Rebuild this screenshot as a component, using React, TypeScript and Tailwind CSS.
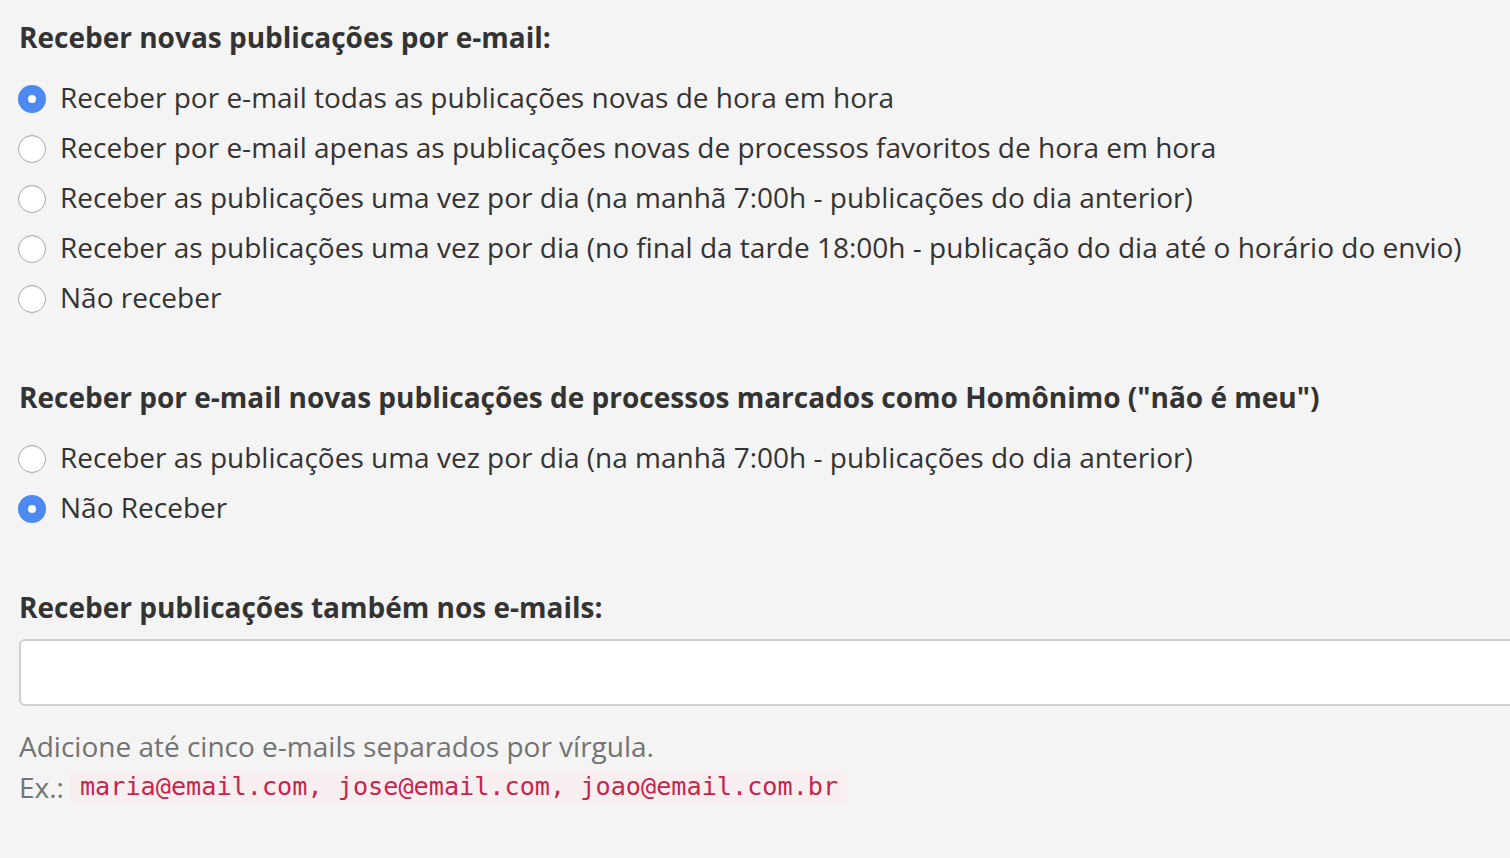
import { useState } from "react";

const frequencyOptions = [
  "Receber por e-mail todas as publicações novas de hora em hora",
  "Receber por e-mail apenas as publicações novas de processos favoritos de hora em hora",
  "Receber as publicações uma vez por dia (na manhã 7:00h - publicações do dia anterior)",
  "Receber as publicações uma vez por dia (no final da tarde 18:00h - publicação do dia até o horário do envio)",
  "Não receber",
];

const homonymOptions = [
  "Receber as publicações uma vez por dia (na manhã 7:00h - publicações do dia anterior)",
  "Não Receber",
];

function Radio({ checked, label, onClick }: { checked: boolean; label: string; onClick: () => void }) {
  return (
    <label className="flex items-center h-[50px] cursor-pointer" onClick={onClick}>
      {checked ? (
        <span className="mt-[4px] w-[28px] h-[28px] rounded-full bg-[#4c89f0] flex items-center justify-center shrink-0">
          <span className="w-[8px] h-[8px] rounded-full bg-white" />
        </span>
      ) : (
        <span className="mt-[4px] w-[28px] h-[28px] rounded-full bg-white border border-[#a9a9a9] shadow-[inset_0_1px_1px_rgba(0,0,0,0.08)] shrink-0" />
      )}
      <span className="ml-[14px] whitespace-nowrap">{label}</span>
    </label>
  );
}

export default function App() {
  const [freq, setFreq] = useState(0);
  const [homonym, setHomonym] = useState(1);

  return (
    <div
      className="h-[858px] overflow-hidden bg-[#f4f4f4] text-[#333] pl-[18px] text-[28px] leading-[36px]"
      style={{ fontFamily: '"Open Sans", sans-serif' }}
    >
      {/* Frequency */}
      <h3 className="font-bold pl-[1px] pt-[19px] pb-[17px]">Receber novas publicações por e-mail:</h3>
      <div>
        {frequencyOptions.map((opt, i) => (
          <Radio key={opt} label={opt} checked={freq === i} onClick={() => setFreq(i)} />
        ))}
      </div>

      {/* Homonym */}
      <h3 className="font-bold pl-[1px] mt-[57px] pb-[17px]">
        Receber por e-mail novas publicações de processos marcados como Homônimo ("não é meu")
      </h3>
      <div>
        {homonymOptions.map((opt, i) => (
          <Radio key={opt} label={opt} checked={homonym === i} onClick={() => setHomonym(i)} />
        ))}
      </div>

      {/* Extra e-mails */}
      <h3 className="font-bold pl-[1px] mt-[57px] mb-[14px]">Receber publicações também nos e-mails:</h3>
      <input
        type="text"
        className="block ml-[1px] w-[1600px] h-[67px] bg-white border-2 border-[#cfcfcf] rounded-[6px] px-4 outline-none"
      />
      <div className="pl-[1px] text-[#737373]">
        <p className="mt-[22px]">Adicione até cinco e-mails separados por vírgula.</p>
        <p className="mt-[5px] flex items-center">
          Ex.:
          <code
            className="ml-[6px] pl-[10px] pr-[9px] bg-[#f7eef0] text-[#c7254e] text-[25.2px] leading-[34px] rounded"
            style={{ fontFamily: '"DejaVu Sans Mono", monospace' }}
          >
            maria@email.com, jose@email.com, joao@email.com.br
          </code>
        </p>
      </div>
    </div>
  );
}
